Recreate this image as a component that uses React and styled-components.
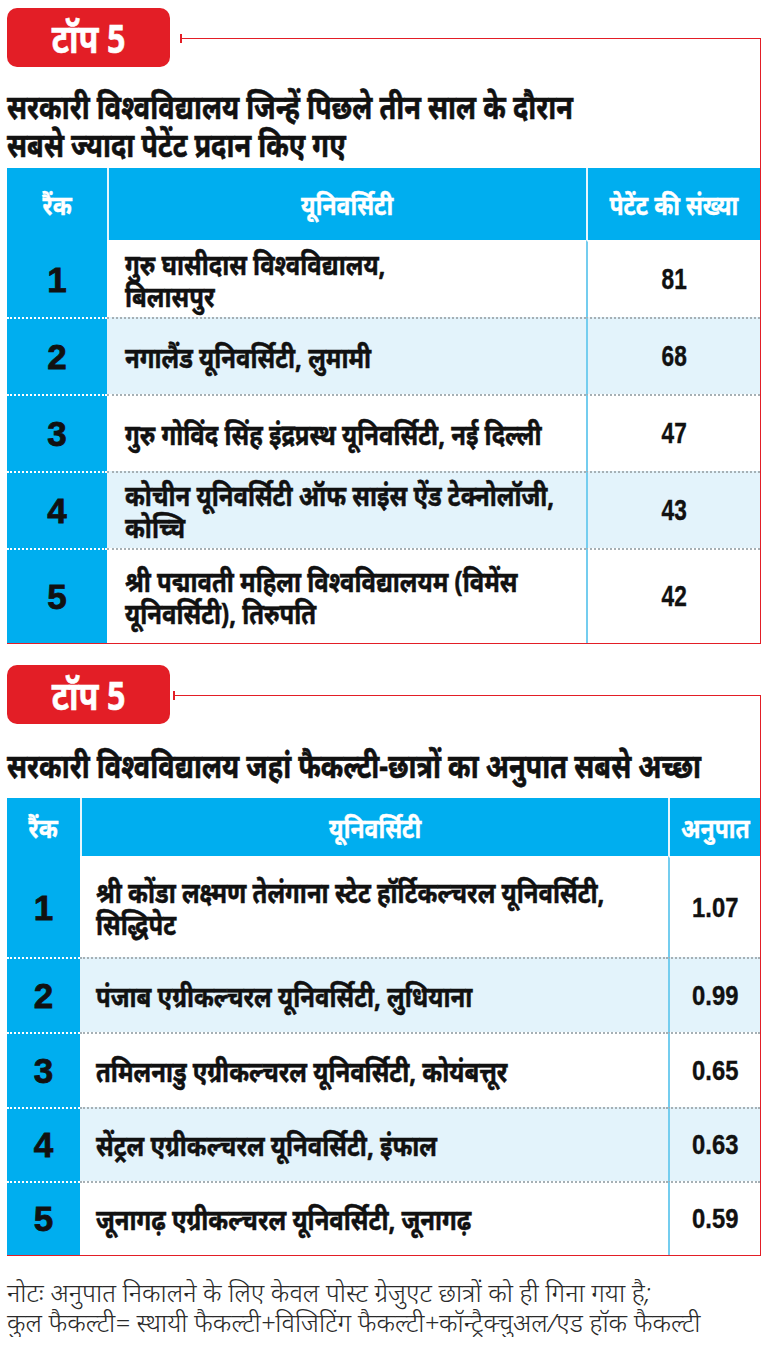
import React from 'react';
import styled, { createGlobalStyle } from 'styled-components';

const Global = createGlobalStyle`
  html, body { margin: 0; padding: 0; background: #fff; }
  body {
    font-family: "Noto Sans", "Noto Sans Devanagari", "Lohit Devanagari", sans-serif;
    color: #111;
  }
`;

const red = '#e31e26';
const blue = '#00aeef';

const Page = styled.div`
  width: 770px;
  padding: 8px 0 0 7px;
  box-sizing: border-box;
`;

const Section = styled.section`
  width: 754px;
  margin-bottom: 21px;
`;

const TopRow = styled.div`
  display: flex;
  height: 59px;
`;

// the print face is a heavy condensed one; squeeze the installed face to its width
const Squeeze = styled.span`
  display: inline-block;
  white-space: nowrap;
  transform: scaleX(${(p) => p.$sx});
  transform-origin: ${(p) => p.$origin || 'center'};
`;

const Line = styled.div`
  white-space: nowrap;
  transform: scaleX(${(p) => p.$sx});
  transform-origin: left center;
`;

const Pill = styled.div`
  width: 163px;
  height: 59px;
  border-radius: 10px;
  background: ${red};
  color: #fff;
  font-weight: 700;
  font-size: 40px;
  -webkit-text-stroke: 0.6px #fff;
  display: flex;
  align-items: center;
  justify-content: center;
`;

const Connector = styled.div`
  flex: 1;
  position: relative;
  margin: 30px 0 0 ${(p) => p.$gap}px;
  border-top: 1.5px solid ${red};
  border-right: 1.5px solid ${red};
  &::before {
    content: '';
    position: absolute;
    left: 0;
    top: -5px;
    width: 1.5px;
    height: 9px;
    background: ${red};
  }
`;

const Body = styled.div`
  border-right: 1.5px solid ${red};
`;

const Title = styled.h2`
  margin: 0;
  font-size: 34px;
  font-weight: 700;
  line-height: 38px;
  -webkit-text-stroke: 0.6px #111;
  padding: ${(p) => p.$pad};
`;

const Table = styled.div`
  display: grid;
  grid-template-columns: ${(p) => p.$cols};
  border-bottom: 1.5px solid ${red};
`;

const Head = styled.div`
  background: ${blue};
  color: #fff;
  font-weight: 700;
  font-size: 27px;
  -webkit-text-stroke: 0.4px #fff;
  height: ${(p) => p.$h}px;
  display: flex;
  align-items: center;
  justify-content: center;
  border-left: ${(p) => (p.$first ? 'none' : '2px solid #e6f6fd')};
`;

const Rank = styled.div`
  background: ${blue};
  color: #111;
  font-family: "Liberation Sans", Arial, sans-serif;
  font-weight: 700;
  font-size: 35px;
  -webkit-text-stroke: 0.8px #111;
  display: flex;
  align-items: center;
  justify-content: center;
  height: ${(p) => p.$h}px;
  border-top: ${(p) => (p.$top ? '2px dotted #fff' : '2px solid transparent')};
  box-sizing: border-box;
`;

const Cell = styled.div`
  background: ${(p) => (p.$shade ? '#e3f3fb' : '#fff')};
  height: ${(p) => p.$h}px;
  box-sizing: border-box;
  border-top: ${(p) => (p.$top ? '2px dotted #a6b0b5' : '2px solid transparent')};
  display: flex;
  align-items: center;
`;

const Name = styled(Cell)`
  padding-left: ${(p) => p.$pl}px;
  font-size: 28px;
  font-weight: 700;
  line-height: 32px;
  -webkit-text-stroke: 0.5px #111;
`;

const Value = styled(Cell)`
  justify-content: center;
  border-left: 2px solid #74cdef;
  font-family: "Liberation Sans", Arial, sans-serif;
  font-weight: 700;
  font-size: ${(p) => p.$fs}px;
  -webkit-text-stroke: 0.4px #111;
`;

const Note = styled.p`
  margin: 14px 0 0;
  font-size: 25.5px;
  font-style: italic;
  font-weight: 300;
  line-height: 30px;
  color: #2a2a2a;
`;

const patents = [
  { name: ['गुरु घासीदास विश्वविद्यालय,', 'बिलासपुर'], v: '81', h: 77 },
  { name: ['नगालैंड यूनिवर्सिटी, लुमामी'], v: '68', h: 77 },
  { name: ['गुरु गोविंद सिंह इंद्रप्रस्थ यूनिवर्सिटी, नई दिल्ली'], v: '47', h: 77 },
  { name: ['कोचीन यूनिवर्सिटी ऑफ साइंस ऐंड टेक्नोलॉजी,', 'कोच्चि'], v: '43', h: 77 },
  { name: ['श्री पद्मावती महिला विश्वविद्यालयम (विमेंस', 'यूनिवर्सिटी), तिरुपति'], v: '42', h: 95 },
];

const ratios = [
  { name: ['श्री कोंडा लक्ष्मण तेलंगाना स्टेट हॉर्टिकल्चरल यूनिवर्सिटी,', 'सिद्धिपेट'], v: '1.07', h: 101 },
  { name: ['पंजाब एग्रीकल्चरल यूनिवर्सिटी, लुधियाना'], v: '0.99', h: 75 },
  { name: ['तमिलनाडु एग्रीकल्चरल यूनिवर्सिटी, कोयंबत्तूर'], v: '0.65', h: 75 },
  { name: ['सेंट्रल एग्रीकल्चरल यूनिवर्सिटी, इंफाल'], v: '0.63', h: 74 },
  { name: ['जूनागढ़ एग्रीकल्चरल यूनिवर्सिटी, जूनागढ़'], v: '0.59', h: 74 },
];

const Block = ({ title, titlePad, gap, cols, headH, heads, rows, pl, vfs, vsx }) => (
  <Section>
    <TopRow>
      <Pill>
        <Squeeze $sx={0.81}>टॉप 5</Squeeze>
      </Pill>
      <Connector $gap={gap} />
    </TopRow>
    <Body>
      <Title $pad={titlePad}>
        {title.map((t) => (
          <Line key={t} $sx={0.8}>
            {t}
          </Line>
        ))}
      </Title>
      <Table $cols={cols}>
        {heads.map((h, i) => (
          <Head key={h} $h={headH} $first={i === 0}>
            <Squeeze $sx={0.85}>{h}</Squeeze>
          </Head>
        ))}
        {rows.map((r, i) => (
          <React.Fragment key={r.v}>
            <Rank $h={r.h} $top={i > 0}>{i + 1}</Rank>
            <Name $h={r.h} $top={i > 0} $shade={i % 2 === 1} $pl={pl}>
              <div>
                {r.name.map((n) => (
                  <Line key={n} $sx={0.855}>
                    {n}
                  </Line>
                ))}
              </div>
            </Name>
            <Value $h={r.h} $top={i > 0} $shade={i % 2 === 1} $fs={vfs}>
              <Squeeze $sx={vsx}>{r.v}</Squeeze>
            </Value>
          </React.Fragment>
        ))}
      </Table>
    </Body>
  </Section>
);

export default function App() {
  return (
    <Page>
      <Global />
      <Block
        title={['सरकारी विश्वविद्यालय जिन्हें पिछले तीन साल के दौरान', 'सबसे ज्यादा पेटेंट प्रदान किए गए']}
        titlePad="20px 0 5px"
        gap={10}
        cols="100px 479px 174px"
        headH={72}
        heads={['रैंक', 'यूनिवर्सिटी', 'पेटेंट की संख्या']}
        rows={patents}
        pl={18}
        vfs={29}
        vsx={0.78}
      />
      <Block
        title={['सरकारी विश्वविद्यालय जहां फैकल्टी-छात्रों का अनुपात सबसे अच्छा']}
        titlePad="22px 0 14px"
        gap={3}
        cols="73px 588px 92px"
        headH={58}
        heads={['रैंक', 'यूनिवर्सिटी', 'अनुपात']}
        rows={ratios}
        pl={16}
        vfs={28}
        vsx={0.85}
      />
      <Note>
        नोटः अनुपात निकालने के लिए केवल पोस्ट ग्रेजुएट छात्रों को ही गिना गया है;
        <br />
        कुल फैकल्टी= स्थायी फैकल्टी+विजिटिंग फैकल्टी+कॉन्ट्रैक्चुअल/एड हॉक फैकल्टी
      </Note>
    </Page>
  );
}
